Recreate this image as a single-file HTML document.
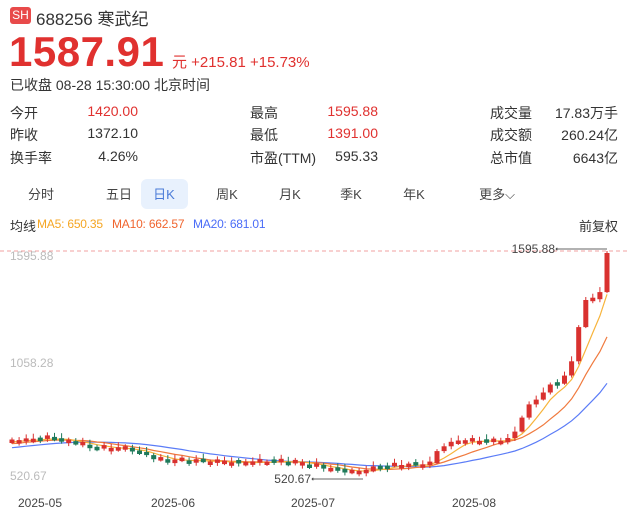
<!DOCTYPE html><html><head><meta charset="utf-8"><style>
body{margin:0;width:628px;height:514px;background:#fff;font-family:"Liberation Sans","Noto Sans CJK SC",sans-serif;color:#333;position:relative;overflow:hidden}
.a{position:absolute;white-space:nowrap}
.r{color:#e0312f}
.tab{position:absolute;top:184px;font-size:13px;color:#444;transform:translateX(-50%)}
.lb{font-size:14px;color:#333}
.v{font-size:14px;text-align:right;width:100px}
.ma{font-size:12px;letter-spacing:-0.2px}
</style></head><body>
<div class="a" style="left:10px;top:7px;width:21px;height:17px;background:#e84a4a;border-radius:3px;color:#fff;font-size:12px;line-height:17px;text-align:center">SH</div>
<div class="a" style="left:36px;top:5px;font-size:17px;color:#333">688256 寒武纪</div>
<div class="a r" style="left:9px;top:28px;font-size:42px;font-weight:bold;letter-spacing:0.5px">1587.91</div>
<div class="a r" style="left:172px;top:51px;font-size:15px">元 +215.81 +15.73%</div>
<div class="a" style="left:10px;top:75px;font-size:14px;color:#333">已收盘 08-28 15:30:00 北京时间</div>

<div class="a lb" style="left:10px;top:103px">今开</div><div class="a v r" style="left:38px;top:103px">1420.00</div>
<div class="a lb" style="left:10px;top:125px">昨收</div><div class="a v" style="left:38px;top:125px">1372.10</div>
<div class="a lb" style="left:10px;top:148px">换手率</div><div class="a v" style="left:38px;top:148px">4.26%</div>
<div class="a lb" style="left:250px;top:103px">最高</div><div class="a v r" style="left:278px;top:103px">1595.88</div>
<div class="a lb" style="left:250px;top:125px">最低</div><div class="a v r" style="left:278px;top:125px">1391.00</div>
<div class="a lb" style="left:250px;top:148px">市盈(TTM)</div><div class="a v" style="left:278px;top:148px">595.33</div>
<div class="a lb" style="left:490px;top:103px">成交量</div><div class="a v" style="left:518px;top:103px">17.83万手</div>
<div class="a lb" style="left:490px;top:125px">成交额</div><div class="a v" style="left:518px;top:125px">260.24亿</div>
<div class="a lb" style="left:490px;top:148px">总市值</div><div class="a v" style="left:518px;top:148px">6643亿</div>

<div class="a" style="left:141px;top:179px;width:47px;height:30px;background:#e8f1fd;border-radius:6px"></div>
<div class="tab" style="left:41px">分时</div>
<div class="tab" style="left:119px">五日</div>
<div class="tab" style="left:164px;color:#4a7bd8">日K</div>
<div class="tab" style="left:227px">周K</div>
<div class="tab" style="left:290px">月K</div>
<div class="tab" style="left:351px">季K</div>
<div class="tab" style="left:414px">年K</div>
<div class="tab" style="left:497px">更多⌵</div>

<div class="a" style="left:10px;top:216px;font-size:13px;color:#333">均线</div>
<div class="a ma" style="left:37px;top:217px;color:#f5a623">MA5: 650.35</div>
<div class="a ma" style="left:112px;top:217px;color:#f0642e">MA10: 662.57</div>
<div class="a ma" style="left:193px;top:217px;color:#4a6cf7">MA20: 681.01</div>
<div class="a" style="right:10px;top:216px;font-size:13px;color:#333">前复权</div>

<svg class="a" style="left:0;top:0" width="628" height="514">
<line x1="0" y1="251" x2="628" y2="251" stroke="#f2a0a0" stroke-dasharray="4,3" stroke-width="1"/>
<text x="10" y="260" font-size="12" fill="#bbb" font-family="Liberation Sans">1595.88</text>
<text x="10" y="367" font-size="12" fill="#bbb" font-family="Liberation Sans">1058.28</text>
<text x="10" y="480" font-size="12" fill="#bbb" font-family="Liberation Sans">520.67</text>
<g font-size="12" fill="#444" font-family="Liberation Sans" text-anchor="middle">
<text x="40" y="507">2025-05</text><text x="173" y="507">2025-06</text><text x="313" y="507">2025-07</text><text x="474" y="507">2025-08</text></g>
<text x="555" y="253" font-size="12" fill="#444" font-family="Liberation Sans" text-anchor="end">1595.88</text>
<circle cx="557" cy="249" r="1.3" fill="#555"/><line x1="557" y1="249" x2="607" y2="249" stroke="#999" stroke-width="1.5"/>
<text x="311" y="483" font-size="12" fill="#444" font-family="Liberation Sans" text-anchor="end">520.67</text>
<circle cx="313" cy="479" r="1.3" fill="#555"/><line x1="313" y1="479" x2="363" y2="479" stroke="#999" stroke-width="1.5"/>
<g id="g"></g>
</svg>
<script>
(function(){
var kp=[[12,441],[50,438],[80,444],[100,448],[130,449],[145,455],[160,460],[200,461],[240,463],[280,461],[300,463],[330,469],[360,473],[370,468],[390,466],[430,464],[440,446],[460,441],[500,441],[512,438],[525,410],[540,395],[550,386],[560,381],[570,370],[578,330],[585,300],[592,300],[600,292],[607,253]];
function iy(x){for(var i=0;i<kp.length-1;i++){if(x<=kp[i+1][0]){var t=(x-kp[i][0])/(kp[i+1][0]-kp[i][0]);return kp[i][1]+t*(kp[i+1][1]-kp[i][1]);}}return kp[kp.length-1][1];}
var N=85,x0=12,st=(607-12)/(N-1),cl=[],xs=[];
for(var i=0;i<N;i++){var x=x0+i*st;xs.push(x);cl.push(iy(x)+(i<80?Math.sin(i*2.3)*1.5:0));}
var pre=[];for(var i=0;i<20;i++)pre.push(456-i*0.8);
var all=pre.concat(cl);
function ma(n){var r=[];for(var i=20;i<all.length;i++){var s=0;for(var j=0;j<n;j++)s+=all[i-j];r.push(s/n);}return r;}
var h='';
[[20,'#5b7cf7'],[10,'#f07a3e'],[5,'#f7b43c']].forEach(function(m){var a=ma(m[0]);var d='';for(var i=0;i<N;i++)d+=(i?'L':'M')+xs[i].toFixed(1)+' '+a[i].toFixed(1);h+='<path d="'+d+'" fill="none" stroke="'+m[1]+'" stroke-width="1.2"/>';});
for(var i=0;i<N;i++){var c=cl[i],o=i?cl[i-1]:c+2;var up=(i%5==2||i%7==4)?false:true;if(i>=80)up=(i!=83);
var jump=Math.abs(c-o);var tp,bt;if(jump>3){tp=Math.min(c,o);bt=Math.max(c,o);up=c<o;}else{tp=c-1.5;bt=c+2;}
var col=up?'#d9312f':'#1f7a5a';var x=xs[i];
var w1=tp-2-(i%4),w2=bt+1+(i%3);
h+='<line x1="'+x.toFixed(1)+'" y1="'+w1.toFixed(1)+'" x2="'+x.toFixed(1)+'" y2="'+w2.toFixed(1)+'" stroke="'+col+'" stroke-width="1"/>';
h+='<rect x="'+(x-2.5).toFixed(1)+'" y="'+tp.toFixed(1)+'" width="5" height="'+Math.max(1,bt-tp).toFixed(1)+'" fill="'+col+'"/>';}
document.getElementById('g').innerHTML=h;
})();
</script>
</body></html>
